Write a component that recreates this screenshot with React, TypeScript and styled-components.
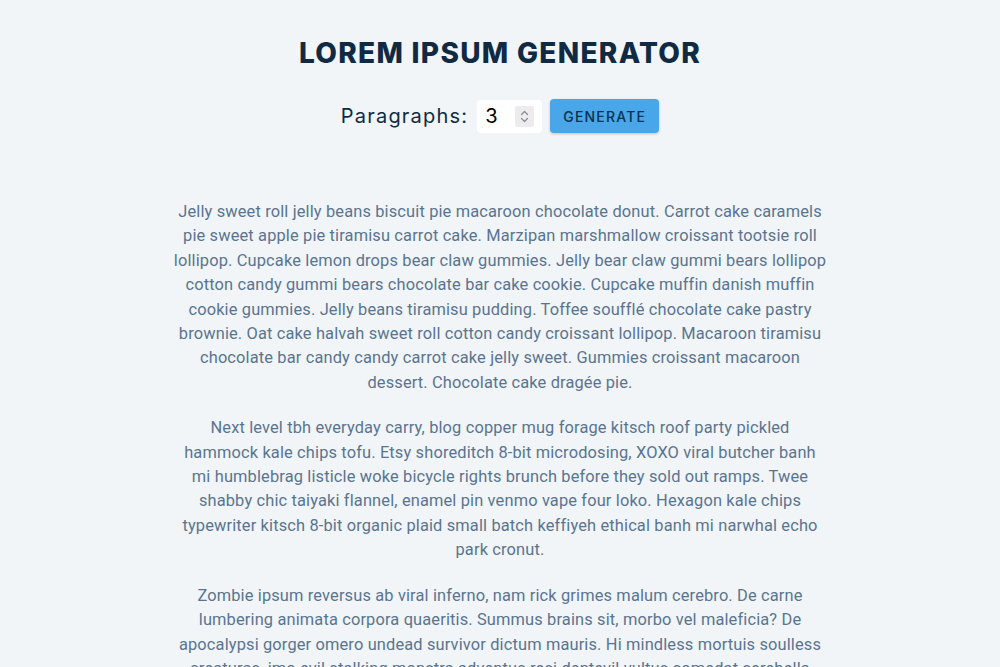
import React, { useState } from 'react';
import styled, { createGlobalStyle } from 'styled-components';

const Colours = {
  Background: '#f1f5f8',
  Navy: '#102a43',
  ButtonText: '#063251',
  Primary: '#49a6e9',
  Text: '#5a7490',
  White: '#ffffff',
  Spinner: '#ececef',
  SpinnerArrow: '#8a8a90',
};

const GlobalStyle = createGlobalStyle`
  * {
    box-sizing: border-box;
  }
  body {
    margin: 0;
    background: ${Colours.Background};
    color: ${Colours.Navy};
    font-family: Inter, 'Noto Sans', sans-serif;
    line-height: 1.5;
    font-size: 16px;
  }
`;

const Section = styled.section`
  width: 653px;
  margin: 0 auto;
  padding-top: 36px;
  text-align: center;
`;

const Title = styled.h3`
  margin: 0;
  font-size: 28px;
  line-height: 35px;
  font-weight: 800;
  letter-spacing: 1.3px;
  text-transform: uppercase;
  color: ${Colours.Navy};
`;

const Form = styled.form`
  display: flex;
  justify-content: center;
  align-items: center;
  margin-top: 28px;
  margin-bottom: 67px;
  letter-spacing: 1.2px;
`;

const Label = styled.label`
  font-size: 20px;
  color: ${Colours.Navy};
  text-transform: capitalize;
`;

// wraps the number field so the stepper can sit over it
const InputWrap = styled.div`
  position: relative;
  margin: 0 8px 0 9px;
`;

const NumberInput = styled.input`
  display: block;
  width: 65px;
  height: 33px;
  padding: 4px 8px;
  border: none;
  border-radius: 4px;
  background: ${Colours.White};
  font-family: Inter, 'Noto Sans', sans-serif;
  font-size: 20px;
  color: #000;
  -moz-appearance: textfield;
  &::-webkit-inner-spin-button,
  &::-webkit-outer-spin-button {
    -webkit-appearance: none;
    margin: 0;
  }
`;

const Spinner = styled.span`
  position: absolute;
  top: 6px;
  right: 8px;
  width: 19px;
  height: 21px;
  background: ${Colours.Spinner};
  border-radius: 2px;
  display: flex;
  align-items: center;
  justify-content: center;
  pointer-events: none;
`;

const Button = styled.button`
  height: 34px;
  padding: 0 11px;
  background: ${Colours.Primary};
  color: ${Colours.ButtonText};
  border: 2px solid transparent;
  border-radius: 4px;
  box-shadow: 0 1px 3px rgba(0, 0, 0, 0.2);
  font-family: Inter, 'Noto Sans', sans-serif;
  font-size: 14px;
  font-weight: 500;
  letter-spacing: 1.2px;
  text-transform: uppercase;
  cursor: pointer;
`;

const Article = styled.article`
  font-family: Roboto, 'Noto Sans', sans-serif;
  font-size: 16.4px;
  line-height: 24.4px;
  letter-spacing: 0.15px;
`;

const Paragraph = styled.p`
  margin: 0 0 21px;
  color: ${Colours.Text};
`;

const texts = [
  'Jelly sweet roll jelly beans biscuit pie macaroon chocolate donut. Carrot cake caramels pie sweet apple pie tiramisu carrot cake. Marzipan marshmallow croissant tootsie roll lollipop. Cupcake lemon drops bear claw gummies. Jelly bear claw gummi bears lollipop cotton candy gummi bears chocolate bar cake cookie. Cupcake muffin danish muffin cookie gummies. Jelly beans tiramisu pudding. Toffee soufflé chocolate cake pastry brownie. Oat cake halvah sweet roll cotton candy croissant lollipop. Macaroon tiramisu chocolate bar candy candy carrot cake jelly sweet. Gummies croissant macaroon dessert. Chocolate cake dragée pie.',
  'Next level tbh everyday carry, blog copper mug forage kitsch roof party pickled hammock kale chips tofu. Etsy shoreditch 8-bit microdosing, XOXO viral butcher banh mi humblebrag listicle woke bicycle rights brunch before they sold out ramps. Twee shabby chic taiyaki flannel, enamel pin venmo vape four loko. Hexagon kale chips typewriter kitsch 8-bit organic plaid small batch keffiyeh ethical banh mi narwhal echo park cronut.',
  'Zombie ipsum reversus ab viral inferno, nam rick grimes malum cerebro. De carne lumbering animata corpora quaeritis. Summus brains sit, morbo vel maleficia? De apocalypsi gorger omero undead survivor dictum mauris. Hi mindless mortuis soulless creaturas, imo evil stalking monstra adventus resi dentevil vultus comedat cerebella viventium. Qui animated corpse, cricket bat max brucks terribilem incessu zomby.',
  'Cat ipsum dolor sit amet, hiss at vacuum cleaner. Sleep on keyboard chase laser, knock over christmas tree. Stare at ceiling lick butt and make a weird face.',
];

const App = () => {
  const [count, setCount] = useState(3);

  return (
    <>
      <GlobalStyle />
      <Section>
        <Title>lorem ipsum generator</Title>
        <Form onSubmit={(e) => e.preventDefault()}>
          <Label htmlFor="amount">paragraphs:</Label>
          <InputWrap>
            <NumberInput
              type="number"
              id="amount"
              value={count}
              onChange={(e) => setCount(Number(e.target.value))}
            />
            <Spinner>
              <svg width="9" height="15" viewBox="0 0 9 15" fill="none" stroke={Colours.SpinnerArrow} strokeWidth="1.2" strokeLinecap="round" strokeLinejoin="round">
                <path d="M1.5 5.5 L4.5 2.5 L7.5 5.5" />
                <path d="M1.5 9.5 L4.5 12.5 L7.5 9.5" />
              </svg>
            </Spinner>
          </InputWrap>
          <Button type="submit">generate</Button>
        </Form>
        <Article>
          {texts.slice(0, count).map((t, i) => (
            <Paragraph key={i}>{t}</Paragraph>
          ))}
        </Article>
      </Section>
    </>
  );
};

export default App;
